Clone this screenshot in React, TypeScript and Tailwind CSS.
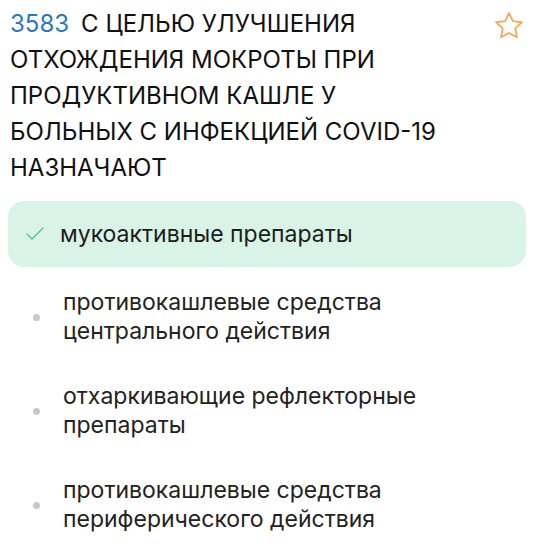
import { Check } from "lucide-react";

type Answer = {
  text: string;
  correct?: boolean;
};

const answers: Answer[] = [
  { text: "мукоактивные препараты", correct: true },
  { text: "противокашлевые средства центрального действия" },
  { text: "отхаркивающие рефлекторные препараты" },
  { text: "противокашлевые средства периферического действия" },
];

function StarIcon() {
  return (
    <svg width="34" height="34" viewBox="0 0 24 24" fill="none">
      <path
        d="M12 2.8l2.75 5.75 6.3.8-4.62 4.35 1.17 6.25L12 16.9l-5.6 3.05 1.17-6.25L2.95 9.35l6.3-.8L12 2.8z"
        stroke="#f6a95c"
        strokeWidth="1.3"
        strokeLinejoin="round"
      />
    </svg>
  );
}

export default function App() {
  return (
    <main
      className="min-h-screen w-[534px] bg-white px-[8px] pt-[6px]"
      style={{ fontFamily: "Inter, 'Noto Sans', sans-serif" }}
    >
      {/* question header */}
      <div className="flex items-start justify-between pl-[2px]">
        <h1 className="max-w-[436px] text-[24px] leading-[36px] text-[#111]">
          <span className="text-[#2a78bd]">3583</span>
          <span className="ml-[12px]">
            С ЦЕЛЬЮ УЛУЧШЕНИЯ ОТХОЖДЕНИЯ МОКРОТЫ ПРИ ПРОДУКТИВНОМ КАШЛЕ У
            БОЛЬНЫХ С ИНФЕКЦИЕЙ COVID-19 НАЗНАЧАЮТ
          </span>
        </h1>
        <div className="mt-[3px]">
          <StarIcon />
        </div>
      </div>

      {/* answers */}
      <div className="mt-[15px]">
        {answers.map((a, i) =>
          a.correct ? (
            <div
              key={i}
              className="flex items-center rounded-[16px] bg-[#d9f3e6] py-[18px] pl-[15px]"
            >
              <Check size={24} strokeWidth={1.2} className="text-[#4fbf86]" />
              <span className="ml-[13px] text-[23px] leading-[30px] text-[#1c1c1c]">
                {a.text}
              </span>
            </div>
          ) : (
            <div
              key={i}
              className={`flex items-center py-[18px] pl-[25px] ${i === 1 ? "mt-[3px]" : ""}`}
            >
              <span className="h-[7px] w-[7px] shrink-0 rounded-full bg-[#c8c8c8]" />
              <span className="ml-[23px] max-w-[430px] text-[23px] leading-[29px] text-[#222]">
                {a.text}
              </span>
            </div>
          )
        )}
      </div>
    </main>
  );
}
